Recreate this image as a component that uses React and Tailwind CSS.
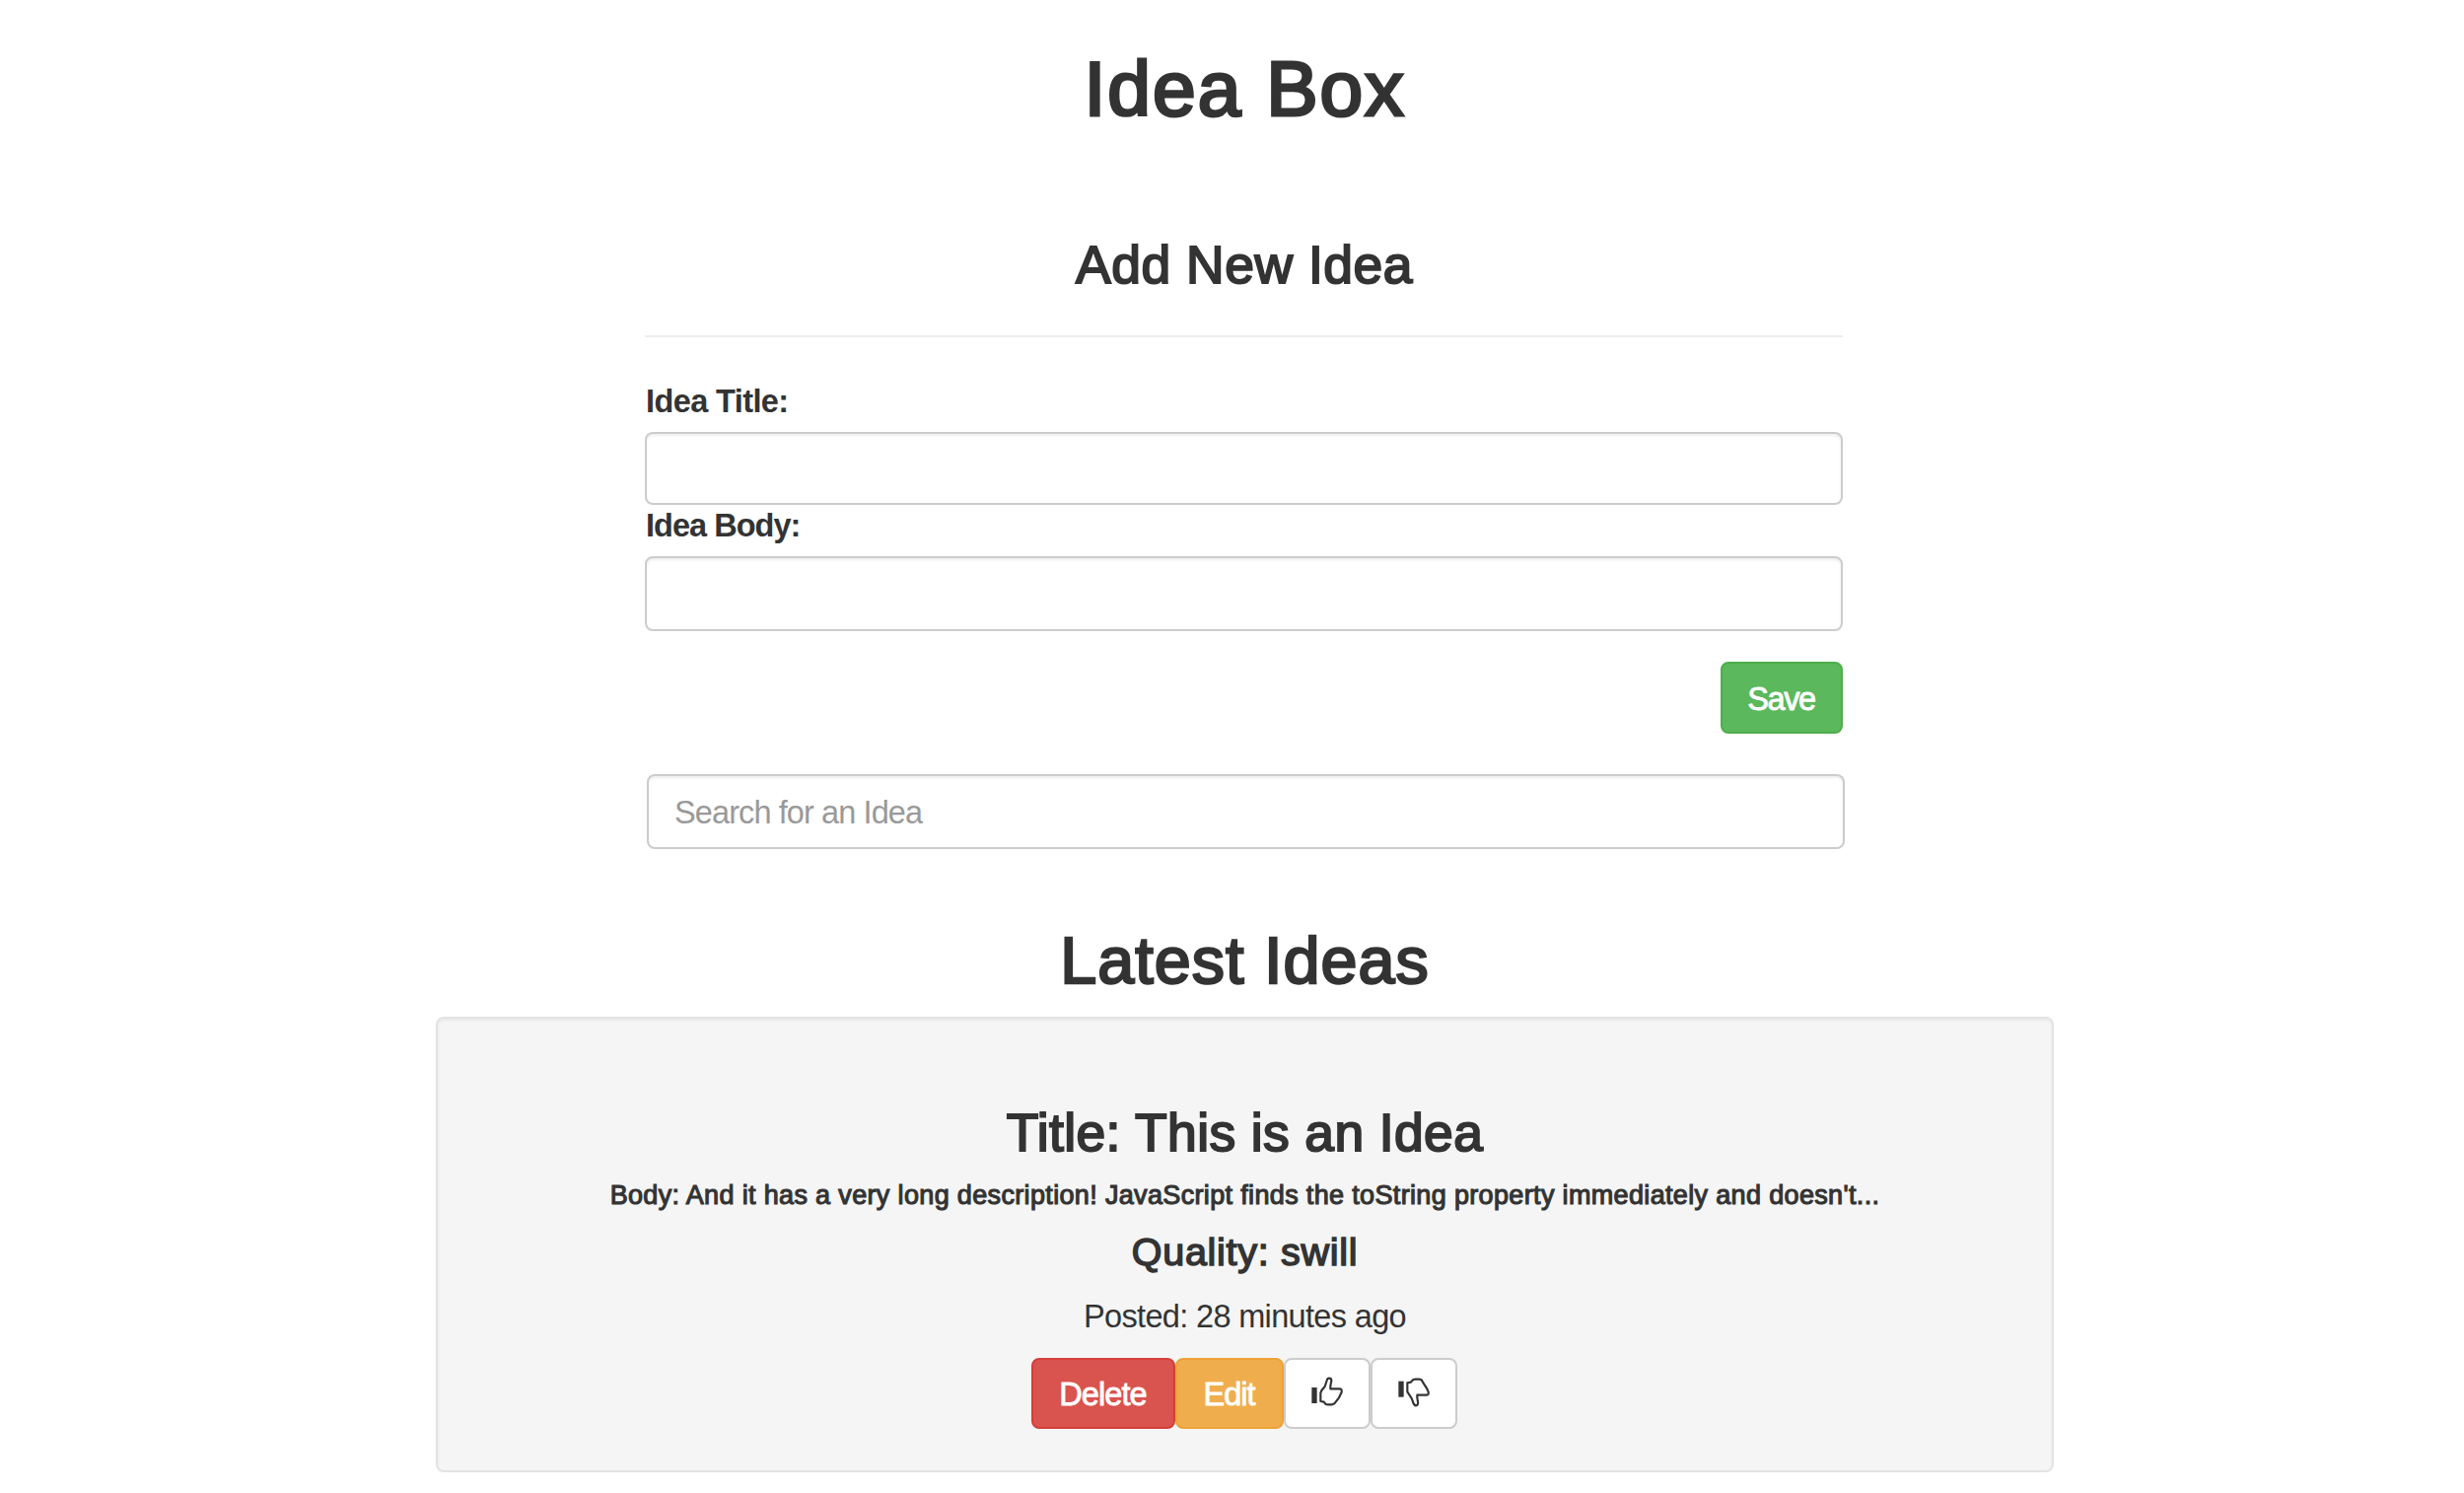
const inputClass =
  "block w-full rounded-lg border-2 border-[#cccccc] bg-white px-[26px] text-[32.5px] tracking-[-0.9px] text-[#333333] shadow-[inset_0_2px_3px_rgba(0,0,0,0.075)] outline-none placeholder:text-[#999999]";

const labelClass = "block h-10 pl-px pt-px text-[32.5px] font-bold leading-10";

const buttonClass =
  "flex h-[72px] items-center justify-center rounded-lg border-2 text-[32.5px] leading-10";

function ThumbUp() {
  return (
    <svg className="h-[31px] w-[32px]" viewBox="0 0 96 93" fill="none">
      <rect x="1" y="33" width="16" height="48" fill="#333" />
      <path
        d="M47 12C48 7 50 5 54 5C59 5 61 8 61 12L58 29V37H85C91 37 93 40 92 47L84 64L70 82L63 85H50L44 84L38 77L28 75V50L31 42L41 30Z"
        stroke="#333"
        strokeWidth="6.5"
        strokeLinejoin="round"
      />
    </svg>
  );
}

function ThumbDown() {
  return (
    <svg className="h-[31px] w-[32px]" viewBox="0 0 96 93" fill="none">
      <rect x="1" y="14" width="16" height="48" fill="#333" />
      <path
        d="M28 19L38 17L46 9L52 8H66L71 10L77 20L88 37L92 47C93 53 91 56 86 56H58V64L60 76C61 84 59 88 54 88C49 88 47 84 45 77L41 66L28 46Z"
        stroke="#333"
        strokeWidth="6.5"
        strokeLinejoin="round"
      />
    </svg>
  );
}

export default function App() {
  return (
    <div className="h-[1514px] w-full overflow-hidden bg-white pl-[442px] pt-[43px] font-['Liberation_Sans',Arial,sans-serif] text-[#333333]">
      <main className="w-[1641px]">
        <h1 className="h-[92px] pt-px text-center text-[78.5px] leading-[92px] tracking-[2px] [-webkit-text-stroke:3.1px_#333333]">
          Idea Box
        </h1>

        <form className="mx-[212px] w-[1215px]" onSubmit={(e) => e.preventDefault()}>
          <h2 className="mt-[103px] h-[60px] pl-px pt-px text-center text-[53.4px] leading-[60px] tracking-[0.555px] [-webkit-text-stroke:2px_#333333]">
            Add New Idea
          </h2>
          <hr className="mb-11 mt-[42px] border-0 border-t-2 border-[#eeeeee]" />
          <label htmlFor="title" className={`${labelClass} tracking-[-0.6px]`}>
            Idea Title:
          </label>
          <input id="title" className={`${inputClass} mt-3 h-[74px]`} />
          <label htmlFor="body" className={`${labelClass} tracking-[-0.98px]`}>
            Idea Body:
          </label>
          <input id="body" className={`${inputClass} mt-3 h-[76px]`} />
          <div className="mt-[31px] flex justify-end">
            <button
              className={`${buttonClass} h-[73px] w-[124px] border-[#4cae4c] bg-[#5cb85c] pr-px pt-0.5 tracking-[-1.4px] text-white [-webkit-text-stroke:0.8px_#ffffff]`}
            >
              Save
            </button>
          </div>
        </form>

        <div className="ml-[214px] mt-[41px] w-[1215px]">
          <input className={`${inputClass} h-[76px] pt-0.5`} placeholder="Search for an Idea" />
        </div>

        <h1 className="mt-[74px] h-[76px] pt-px text-center text-[66.5px] leading-[76px] tracking-[1px] [-webkit-text-stroke:2.4px_#333333]">
          Latest Ideas
        </h1>

        <section className="mt-5 h-[462px] rounded-lg border-2 border-[#e3e3e3] bg-[#f5f5f5] pt-[85px] text-center shadow-[inset_0_2px_3px_rgba(0,0,0,0.05)]">
          <h2 className="h-[60px] pt-px text-[53.4px] leading-[60px] tracking-[0.4px] [-webkit-text-stroke:2px_#333333]">
            Title: This is an Idea
          </h2>
          <h5 className="mt-[17px] h-8 whitespace-nowrap pt-px text-[27px] leading-8 tracking-[0.345px] [-webkit-text-stroke:1.1px_#333333]">
            Body: And it has a very long description! JavaScript finds the toString property immediately and doesn't...
          </h5>
          <h3 className="mt-[18px] h-[46px] pt-px text-[39.5px] leading-[46px] tracking-[0.7px] [-webkit-text-stroke:1.5px_#333333]">
            Quality: swill
          </h3>
          <p className="mt-[23px] h-10 pt-px text-[32.5px] leading-10 tracking-[-0.657px]">
            Posted: 28 minutes ago
          </p>
          <div className="mr-0.5 mt-[23px] flex justify-center">
            <button
              className={`${buttonClass} w-[146px] border-[#d43f3a] bg-[#d9534f] pt-0.5 tracking-[-0.914px] text-white [-webkit-text-stroke:0.8px_#ffffff]`}
            >
              Delete
            </button>
            <button
              className={`${buttonClass} w-[110px] border-[#eea236] bg-[#f0ad4e] pt-0.5 tracking-[-0.958px] text-white [-webkit-text-stroke:0.8px_#ffffff]`}
            >
              Edit
            </button>
            <button
              aria-label="Thumbs up"
              className={`${buttonClass} w-[88px] border-[#cccccc] bg-white pb-1`}
            >
              <ThumbUp />
            </button>
            <button
              aria-label="Thumbs down"
              className={`${buttonClass} w-[88px] border-[#cccccc] bg-white pb-1`}
            >
              <ThumbDown />
            </button>
          </div>
        </section>
      </main>
    </div>
  );
}
